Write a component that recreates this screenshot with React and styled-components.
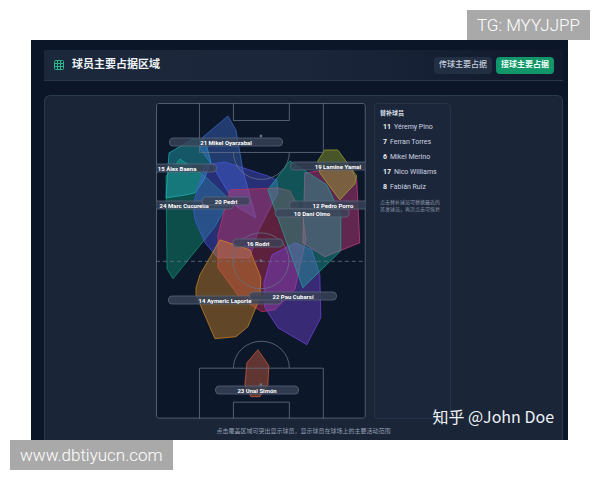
import React, { useState } from "react";
import styled, { createGlobalStyle } from "styled-components";
import { Grid3x3 } from "lucide-react";

/*~~~~~~~~~~~~~~~~~~~~~~~~~~~~~~~~~~~~~~~~~~~~~~~~~~~~~~~~~~~~~~~~~~~~~~~~~~~~~~~~~~~~~~
                                            DATA
 ~~~~~~~~~~~~~~~~~~~~~~~~~~~~~~~~~~~~~~~~~~~~~~~~~~~~~~~~~~~~~~~~~~~~~~~~~~~~~~~~~~~~~*/

// pitch units: 210 wide, 316 long. x/y is the middle of the name tag
const PLAYERS = [
    {
        number: 23,
        name: "Unai Simón",
        color: "#e0643c",
        x: 101,
        y: 287,
        tag: 84,
        zone: "102,247 113,263 112,282 104,294 95,294 89,282 91,260",
    },
    {
        number: 24,
        name: "Marc Cucurella",
        color: "#12a37a",
        x: 28,
        y: 102,
        tag: 100,
        zone: "24,56 51,75 74,97 59,124 17,176 11,166 10,73",
    },
    {
        number: 15,
        name: "Álex Baena",
        color: "#22b8c4",
        x: 21,
        y: 65,
        tag: 80,
        zone: "13,50 37,36 49,37 55,59 48,77 39,90 30,92 10,95",
    },
    {
        number: 21,
        name: "Mikel Oyarzabal",
        color: "#4272d8",
        x: 70,
        y: 39,
        tag: 114,
        zone: "72,13 46,35 44,46 56,62 81,104 100,115 87,67 80,27",
    },
    {
        number: 20,
        name: "Pedri",
        color: "#5058e8",
        x: 70,
        y: 98,
        tag: 49,
        zone: "49,62 69,59 112,73 121,77 122,90 102,129 94,155 62,155 49,140 39,117 37,102",
    },
    {
        number: 16,
        name: "Rodri",
        color: "#d8325a",
        x: 102,
        y: 140,
        tag: 51,
        zone: "74,87 122,85 134,88 147,112 150,137 139,187 119,207 106,209 84,195 62,165 62,132",
    },
    {
        number: 14,
        name: "Aymeric Laporte",
        color: "#e09024",
        x: 69,
        y: 197,
        tag: 114,
        zone: "64,137 94,147 105,175 104,195 92,224 80,234 59,236 40,192 40,185 44,172",
    },
    {
        number: 22,
        name: "Pau Cubarsí",
        color: "#7c48e8",
        x: 137,
        y: 193,
        tag: 88,
        zone: "116,152 139,140 156,147 164,172 165,215 151,242 122,225 109,205 108,180",
    },
    {
        number: 12,
        name: "Pedro Porro",
        color: "#e0408c",
        x: 177,
        y: 102,
        tag: 88,
        zone: "149,70 194,63 201,77 204,140 169,154 147,140",
    },
    {
        number: 10,
        name: "Dani Olmo",
        color: "#1cb09a",
        x: 156,
        y: 110,
        tag: 75,
        zone: "134,58 112,87 147,185 185,148 185,112 171,82",
    },
    {
        number: 19,
        name: "Lamine Yamal",
        color: "#a0b428",
        x: 182,
        y: 63,
        tag: 96,
        zone: "169,47 182,47 201,73 199,81 184,97 164,70 162,58",
    },
];

const SUBSTITUTES = [
    { number: 11, name: "Yéremy Pino" },
    { number: 7, name: "Ferran Torres" },
    { number: 6, name: "Mikel Merino" },
    { number: 17, name: "Nico Williams" },
    { number: 8, name: "Fabián Ruiz" },
];

/*~~~~~~~~~~~~~~~~~~~~~~~~~~~~~~~~~~~~~~~~~~~~~~~~~~~~~~~~~~~~~~~~~~~~~~~~~~~~~~~~~~~~~~
                                            STYLES
 ~~~~~~~~~~~~~~~~~~~~~~~~~~~~~~~~~~~~~~~~~~~~~~~~~~~~~~~~~~~~~~~~~~~~~~~~~~~~~~~~~~~~~*/

const GlobalStyle = createGlobalStyle`
    * {
        box-sizing: border-box;
    }

    body {
        margin: 0;
        background: #fff;
        font-family: Roboto, "Noto Sans CJK SC", sans-serif;
    }

    button {
        font-family: inherit;
        border: none;
        cursor: pointer;
    }
`;

const Page = styled.div`
    position: relative;
    padding: 40px 32px 40px 31px;
`;

const Board = styled.main`
    position: relative;
    display: flex;
    flex-direction: column;
    gap: 14px;
    padding: 10px 5px 0 13px;
    background: #0b1628;
`;

const Header = styled.header`
    display: flex;
    align-items: center;
    gap: 7px;
    height: 31px;
    padding: 0 9px;
    background: linear-gradient(90deg, #1b273a, #1c263a 50%, #10192c);
    border-bottom: 1px solid #273649;
`;

const Title = styled.h1`
    flex: 1;
    margin: 0;
    color: #eef2f7;
    font-size: 11px;
    font-weight: 700;
    line-height: 16px;
`;

const Tabs = styled.div`
    display: flex;
    gap: 4px;
`;

const Tab = styled.button`
    height: 17px;
    padding: 0 5px;
    border-radius: 4px;
    background: ${(props) => (props.$active ? "#109668" : "#222e42")};
    color: ${(props) => (props.$active ? "#effff8" : "#c3ccd9")};
    font-size: 8px;
    font-weight: ${(props) => (props.$active ? 700 : 500)};
    line-height: 16px;
`;

const Card = styled.section`
    padding: 7px 0 4px;
    background: #1a2537;
    border: 1px solid #2a3b4c;
    border-bottom: none;
    border-radius: 6px 6px 0 0;
`;

const Columns = styled.div`
    display: grid;
    grid-template-columns: minmax(0, 30fr) minmax(0, 11fr);
    gap: 8px;
    width: 57%;
    margin: 0 auto;
`;

const Pitch = styled.div`
    position: relative;
    overflow: hidden;
    border-radius: 3px;
    background: #0d172a;

    svg {
        display: block;
        width: 100%;
        height: auto;
    }
`;

const Zone = styled.polygon`
    fill: ${(props) => props.$color};
    fill-opacity: ${(props) => (props.$dimmed ? 0.1 : 0.4)};
    stroke: ${(props) => props.$color};
    stroke-opacity: ${(props) => (props.$dimmed ? 0.2 : 0.65)};
    cursor: pointer;
`;

const NameTag = styled.button`
    position: absolute;
    left: ${(props) => (props.$x / 210) * 100}%;
    top: ${(props) => (props.$y / 316) * 100}%;
    transform: translate(-50%, -50%);
    width: ${(props) => props.$width}px;
    height: 9px;
    padding: 0;
    border: 1px solid rgba(112, 126, 148, 0.5);
    border-radius: 5px;
    background: rgba(56, 68, 88, 0.8);
    color: #fff;
    font-size: 6px;
    font-weight: 700;
    line-height: 7px;
    text-align: center;
    white-space: nowrap;
`;

const Bench = styled.aside`
    padding: 4px 5px;
    background: #1c263a;
    border: 1px solid #253247;
    border-radius: 4px;
`;

const BenchTitle = styled.h2`
    margin: 0 0 2px;
    color: #dde4ec;
    font-size: 6px;
    font-weight: 700;
    line-height: 10px;
`;

const BenchList = styled.ul`
    margin: 0;
    padding: 0;
    list-style: none;
`;

const BenchPlayer = styled.button`
    display: flex;
    gap: 3px;
    width: 100%;
    height: 15px;
    padding: 0 3px;
    background: none;
    color: #cdd5e0;
    font-size: 7px;
    line-height: 15px;
    white-space: nowrap;

    strong {
        color: #eef2f7;
        font-weight: 700;
    }
`;

const BenchNote = styled.p`
    margin: 4px 0 0;
    color: #8a97a9;
    font-size: 5px;
    line-height: 7px;
    white-space: nowrap;
`;

const Hint = styled.p`
    margin: 7px 0 0;
    color: #929eb0;
    font-size: 6px;
    line-height: 10px;
    text-align: center;
`;

const Signature = styled.span`
    position: absolute;
    right: 14px;
    bottom: 12px;
    color: #eef1f5;
    font-family: "Noto Sans CJK SC", sans-serif;
    font-size: 16px;
    line-height: 24px;
`;

const Watermark = styled.div`
    position: absolute;
    ${(props) => (props.$corner === "top" ? "top: 10px; right: 10px;" : "bottom: 10px; left: 10px;")}
    padding: 0 10px;
    background: #a9a9a9;
    color: #fff;
    font-size: 17px;
    font-weight: 300;
    line-height: 30px;
`;

/*~~~~~~~~~~~~~~~~~~~~~~~~~~~~~~~~~~~~~~~~~~~~~~~~~~~~~~~~~~~~~~~~~~~~~~~~~~~~~~~~~~~~~~
                                          COMPONENTS
 ~~~~~~~~~~~~~~~~~~~~~~~~~~~~~~~~~~~~~~~~~~~~~~~~~~~~~~~~~~~~~~~~~~~~~~~~~~~~~~~~~~~~~*/

function PitchLines() {
    return (
        <g fill="none" stroke="#647187" strokeOpacity="0.8">
            <rect x="0.5" y="0.5" width="209" height="315" rx="2" />
            <path d="M0 158.5H210" strokeDasharray="4 3" />
            <circle cx="105" cy="158" r="28" />
            <path d="M43.5 0V49.5H167.5V0M77.5 0V17.5H133.5V0M77.5 49.5a28 27 0 0 0 56 0" />
            <path d="M43.5 316V265.5H167.5V316M77.5 316V299.5H133.5V316M77.5 265.5a28 27 0 0 1 56 0" />
            <g fill="#647187" stroke="none">
                <circle cx="105" cy="33" r="1.5" />
                <circle cx="105" cy="158" r="1.5" />
                <circle cx="105" cy="282" r="1.5" />
            </g>
        </g>
    );
}

export default function App() {
    const [mode, setMode] = useState("receive");
    const [selected, setSelected] = useState(null);

    const toggle = (number) => {
        setSelected(selected === number ? null : number);
    };

    return (
        <Page>
            <GlobalStyle />
            <Board>
                <Header>
                    <Grid3x3 size={12} color="#2bb58c" />
                    <Title>球员主要占据区域</Title>
                    <Tabs>
                        <Tab $active={mode === "pass"} onClick={() => setMode("pass")}>
                            传球主要占据
                        </Tab>
                        <Tab $active={mode === "receive"} onClick={() => setMode("receive")}>
                            接球主要占据
                        </Tab>
                    </Tabs>
                </Header>
                <Card>
                    <Columns>
                        <Pitch>
                            <svg viewBox="0 0 210 316">
                                {PLAYERS.map((e) => (
                                    <Zone
                                        key={e.number}
                                        points={e.zone}
                                        $color={e.color}
                                        $dimmed={selected !== null && selected !== e.number}
                                        onClick={() => toggle(e.number)}
                                    />
                                ))}
                                <PitchLines />
                            </svg>
                            {PLAYERS.map((e) => (
                                <NameTag
                                    key={e.number}
                                    $x={e.x}
                                    $y={e.y}
                                    $width={e.tag}
                                    onClick={() => toggle(e.number)}
                                >
                                    {e.number + " " + e.name}
                                </NameTag>
                            ))}
                        </Pitch>
                        <Bench>
                            <BenchTitle>替补球员</BenchTitle>
                            <BenchList>
                                {SUBSTITUTES.map((e) => (
                                    <li key={e.number}>
                                        <BenchPlayer>
                                            <strong>{e.number}</strong>
                                            {e.name}
                                        </BenchPlayer>
                                    </li>
                                ))}
                            </BenchList>
                            <BenchNote>
                                点击替补球员可替换最近的
                                <br />
                                首发球员，再次点击可恢复
                            </BenchNote>
                        </Bench>
                    </Columns>
                    <Hint>点击覆盖区域可突出显示球员，显示球员在球场上的主要活动范围</Hint>
                </Card>
                <Signature>知乎 @John Doe</Signature>
            </Board>
            <Watermark $corner="top">TG: MYYJJPP</Watermark>
            <Watermark $corner="bottom">www.dbtiyucn.com</Watermark>
        </Page>
    );
}
